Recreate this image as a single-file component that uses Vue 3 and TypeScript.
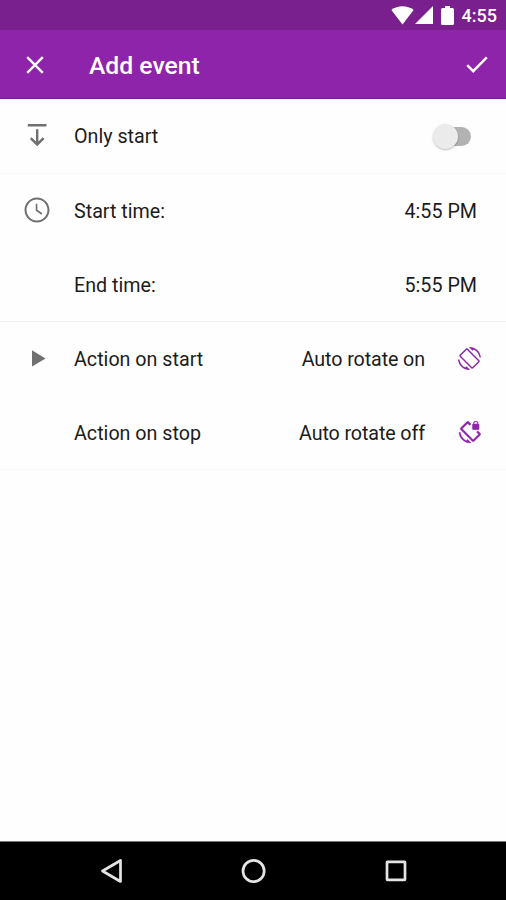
<script setup lang="ts">
import { ref } from 'vue'

type IconName = 'download' | 'clock' | 'play' | 'rotate' | 'lock'

interface Row {
  label: string
  lead?: IconName
  value?: string
  trail?: IconName
  toggle?: boolean
}

const onlyStart = ref(false)

const icons: Record<IconName, string> = {
  download: 'M4.600 3.200h15v2h-15zM11.200 7.400h1.900v9.800l3.500-3.500 1.400 1.400-5.850 5.800-5.850-5.800 1.400-1.400 3.500 3.500z',
  clock:
    'M11.99 2C6.47 2 2 6.48 2 12s4.47 10 9.99 10C17.52 22 22 17.52 22 12S17.52 2 11.99 2zM12 20.400c-4.640 0-8.400-3.760-8.400-8.400S7.360 3.600 12 3.600s8.400 3.760 8.400 8.400-3.760 8.400-8.400 8.400zM12.300 7H11v5.600l4.500 3.200.8-1.200-4-2.800z',
  play: 'M8 5.800v13l10.800-6.500z',
  rotate:
    'M16.48 2.52c3.27 1.55 5.61 4.72 5.97 8.48h1.5C23.44 4.84 18.29 0 12 0l-.66.03 3.81 3.81 1.33-1.32zm-6.25-.77c-.59-.59-1.54-.59-2.12 0L1.75 8.11c-.59.59-.59 1.54 0 2.12l12.02 12.02c.59.59 1.54.59 2.12 0l6.36-6.36c.59-.59.59-1.54 0-2.12L10.23 1.75zm4.6 19.44L2.81 9.17l6.36-6.36 12.02 12.02-6.36 6.36zm-7.31.29C4.25 19.94 1.91 16.76 1.55 13H.05C.56 19.16 5.71 24 12 24l.66-.03-3.81-3.81-1.33 1.32z',
  lock:
    'M23.25 12.77l-2.57-2.57-1.41 1.41 2.22 2.22-5.66 5.66L4.51 8.17l5.66-5.66 2.1 2.1 1.41-1.41L11.23.75c-.59-.59-1.54-.59-2.12 0L2.75 7.11c-.59.59-.59 1.54 0 2.12l12.02 12.02c.59.59 1.54.59 2.12 0l6.36-6.36c.59-.59.59-1.54 0-2.12zM8.47 20.48C5.2 18.94 2.86 15.76 2.5 12H1c.51 6.16 5.66 11 11.95 11l.66-.03-3.81-3.82-1.33 1.33zM16 9h5c.55 0 1-.45 1-1V4c0-.55-.45-1-1-1v-.5C21 1.12 19.88 0 18.5 0S16 1.12 16 2.5V3c-.55 0-1 .45-1 1v4c0 .55.45 1 1 1zm.8-6.5c0-.94.76-1.7 1.7-1.7s1.7.76 1.7 1.7V3h-3.4v-.5z',
}

const groups: Row[][] = [
  [{ label: 'Only start', lead: 'download', toggle: true }],
  [
    { label: 'Start time:', lead: 'clock', value: '4:55 PM' },
    { label: 'End time:', value: '5:55 PM' },
  ],
  [
    { label: 'Action on start', lead: 'play', value: 'Auto rotate on', trail: 'rotate' },
    { label: 'Action on stop', value: 'Auto rotate off', trail: 'lock' },
  ],
]
</script>

<template>
  <div class="screen">
    <div class="status">
      <svg class="wifi" viewBox="0 0 24 20"><path d="M12 19.500L.3 4.200C7-1 17-1 23.700 4.200z" /></svg>
      <svg class="signal" viewBox="0 0 18 18"><path d="M18 0v18H0z" /></svg>
      <svg class="battery" viewBox="0 0 13 19"><path d="M4 0h5v2h2.500a1.500 1.500 0 0 1 1.500 1.500v14a1.500 1.500 0 0 1-1.500 1.500h-10A1.500 1.500 0 0 1 0 17.500v-14A1.500 1.500 0 0 1 1.500 2H4z" /></svg>
      <span class="time">4:55</span>
    </div>
    <header class="bar">
      <button class="icon-btn" aria-label="Close">
        <svg class="close" viewBox="0 0 18 18"><path d="M1.200 1.200l15.600 15.600M16.800 1.200L1.200 16.800" /></svg>
      </button>
      <h1 class="title">Add event</h1>
      <button class="icon-btn" aria-label="Save">
        <svg class="check" viewBox="0 0 22 17"><path d="M1.200 9.200l6 6L20.800 1.400" /></svg>
      </button>
    </header>
    <main class="content">
      <section v-for="(group, g) in groups" :key="g" class="group">
        <div v-for="row in group" :key="row.label" class="row">
          <span class="lead">
            <svg v-if="row.lead" :class="['lead-icon', row.lead]" viewBox="0 0 24 24"><path :d="icons[row.lead]" /></svg>
          </span>
          <span class="label">{{ row.label }}</span>
          <button
            v-if="row.toggle"
            :class="['switch', { on: onlyStart }]"
            role="switch"
            :aria-checked="onlyStart"
            @click="onlyStart = !onlyStart"
          >
            <span class="knob"></span>
          </button>
          <span v-if="row.value" class="value">{{ row.value }}</span>
          <svg v-if="row.trail" :class="['trail', row.trail]" viewBox="0 0 24 24"><path :d="icons[row.trail]" /></svg>
        </div>
      </section>
    </main>
    <nav class="nav">
      <svg viewBox="0 0 26 26"><path d="M21.500 2.500v21L3.500 13z" /></svg>
      <svg viewBox="0 0 26 26"><circle cx="12.600" cy="13" r="10.600" /></svg>
      <svg viewBox="0 0 26 26"><rect x="4" y="3.800" width="18" height="18" rx=".5" /></svg>
    </nav>
  </div>
</template>

<style>
body {
  margin: 0;
}
</style>

<style scoped>
.screen {
  display: flex;
  flex-direction: column;
  width: 506px;
  height: 900px;
  background: #fefefe;
  font-family: Roboto, sans-serif;
  color: #1c1c1c;
  overflow: hidden;
}
button {
  padding: 0;
  border: 0;
  background: none;
}
svg {
  display: block;
  flex: none;
}
.status {
  display: flex;
  align-items: center;
  justify-content: flex-end;
  height: 30px;
  box-sizing: border-box;
  padding-right: 9px;
  background: #7a1f8e;
  color: #fff;
}
.status svg {
  fill: #fff;
}
.wifi {
  width: 23px;
  height: 19px;
  margin-right: 1px;
}
.signal {
  width: 18px;
  height: 18px;
  margin-right: 8px;
}
.battery {
  width: 13px;
  height: 19px;
  margin-right: 8px;
}
.time {
  font-size: 18px;
  font-weight: 500;
  line-height: 30px;
  padding-top: 1px;
}
.bar {
  display: flex;
  align-items: center;
  height: 69px;
  box-sizing: border-box;
  padding: 1px 18px 0 26px;
  background: #8e24aa;
  border-bottom: 1px solid #751b8d;
}
.icon-btn {
  flex: none;
}
.icon-btn svg {
  fill: none;
  stroke: #fff;
  stroke-width: 2.400;
}
.close {
  width: 18px;
  height: 18px;
}
.check {
  width: 22px;
  height: 17px;
}
.title {
  flex: 1;
  margin: 0 0 0 45px;
  padding-top: 3px;
  font-size: 24.700px;
  font-weight: 500;
  line-height: 32px;
  color: #fff;
}
.content {
  flex: 1;
}
.group {
  border-bottom: 1px solid #f8f8f8;
}
.group:nth-child(2) {
  border-bottom-color: #f0f0f0;
}
.row {
  display: flex;
  align-items: center;
  height: 74px;
  box-sizing: border-box;
  padding: 0 29px 0 22px;
}
.group:nth-child(n + 2) .row:last-child {
  height: 73px;
}
.lead {
  width: 52px;
  flex: none;
}
.lead-icon {
  width: 30px;
  height: 30px;
  margin-bottom: 2px;
  fill: #707070;
}
.label,
.value {
  padding-top: 2px;
  font-size: 19.700px;
  line-height: 24px;
  white-space: nowrap;
}
.value:not(:last-child) {
  letter-spacing: -0.100px;
}
.label {
  flex: 1;
}
.trail {
  width: 23px;
  height: 23px;
  margin: 0 -4px 1px 33px;
  fill: #8e24aa;
}
.trail.lock {
  stroke: #8e24aa;
  stroke-width: 0.400;
}
.switch {
  display: flex;
  align-items: center;
  width: 34px;
  height: 19px;
  margin-right: 6px;
  border-radius: 10px;
  background: #b2b2b2;
}
.knob {
  flex: none;
  width: 25px;
  height: 25px;
  margin-left: -4px;
  border-radius: 50%;
  background: #ebebeb;
  box-shadow: 0 1px 2px rgba(0, 0, 0, 0.25);
}
.switch.on .knob {
  margin-left: 13px;
  background: #8e24aa;
}
.nav {
  display: flex;
  align-items: center;
  justify-content: space-between;
  height: 59px;
  box-sizing: border-box;
  padding: 0 97px 0 99px;
  border-top: 1px solid #777;
  background: #000;
}
.nav svg {
  width: 26px;
  height: 26px;
  fill: none;
  stroke: #e4e4e4;
  stroke-width: 2.700;
  stroke-linejoin: round;
}
</style>
